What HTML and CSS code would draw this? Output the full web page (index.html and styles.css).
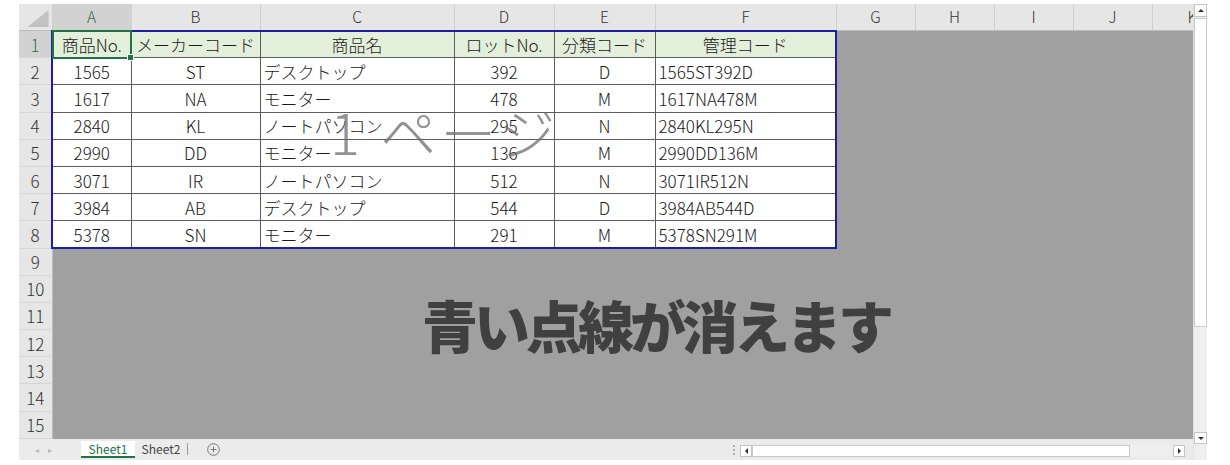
FILE: index.html
```html
<!DOCTYPE html>
<html lang="ja">
<head>
<meta charset="utf-8">
<title>Sheet</title>
<link rel="stylesheet" href="styles.css">
</head>
<body>
<div class="page">
  <div class="app">
    <table class="grid">
      <colgroup>
        <col class="w-rh"><col class="w-a"><col class="w-b"><col class="w-c"><col class="w-d"><col class="w-e"><col class="w-f"><col class="w-n"><col class="w-n"><col class="w-n"><col class="w-n"><col class="w-k">
      </colgroup>
      <thead>
        <tr class="hdr">
          <th class="corner"><div class="corner-in"><span class="tri"></span></div></th>
          <th class="sel">A</th><th>B</th><th>C</th><th>D</th><th>E</th><th>F</th><th>G</th><th>H</th><th>I</th><th>J</th><th class="kcol"><span class="kin">K</span></th>
        </tr>
      </thead>
      <tbody>
        <tr class="r">
          <th class="rh sel">1</th>
          <td class="c h bt bl">商品No.</td><td class="c h bt">メーカーコード</td><td class="c h bt">商品名</td><td class="c h bt">ロットNo.</td><td class="c h bt">分類コード</td><td class="c h bt br">管理コード</td>
          <td class="g"></td><td class="g"></td><td class="g"></td><td class="g"></td><td class="g"></td>
        </tr>
        <tr class="r">
          <th class="rh">2</th>
          <td class="c bl">1565</td><td class="c">ST</td><td class="c l">デスクトップ</td><td class="c">392</td><td class="c">D</td><td class="c l br">1565ST392D</td>
          <td class="g"></td><td class="g"></td><td class="g"></td><td class="g"></td><td class="g"></td>
        </tr>
        <tr class="r">
          <th class="rh">3</th>
          <td class="c bl">1617</td><td class="c">NA</td><td class="c l">モニター</td><td class="c">478</td><td class="c">M</td><td class="c l br">1617NA478M</td>
          <td class="g"></td><td class="g"></td><td class="g"></td><td class="g"></td><td class="g"></td>
        </tr>
        <tr class="r">
          <th class="rh">4</th>
          <td class="c bl">2840</td><td class="c">KL</td><td class="c l">ノートパソコン</td><td class="c">295</td><td class="c">N</td><td class="c l br">2840KL295N</td>
          <td class="g"></td><td class="g"></td><td class="g"></td><td class="g"></td><td class="g"></td>
        </tr>
        <tr class="r">
          <th class="rh">5</th>
          <td class="c bl">2990</td><td class="c">DD</td><td class="c l">モニター</td><td class="c">136</td><td class="c">M</td><td class="c l br">2990DD136M</td>
          <td class="g"></td><td class="g"></td><td class="g"></td><td class="g"></td><td class="g"></td>
        </tr>
        <tr class="r">
          <th class="rh">6</th>
          <td class="c bl">3071</td><td class="c">IR</td><td class="c l">ノートパソコン</td><td class="c">512</td><td class="c">N</td><td class="c l br">3071IR512N</td>
          <td class="g"></td><td class="g"></td><td class="g"></td><td class="g"></td><td class="g"></td>
        </tr>
        <tr class="r">
          <th class="rh">7</th>
          <td class="c bl">3984</td><td class="c">AB</td><td class="c l">デスクトップ</td><td class="c">544</td><td class="c">D</td><td class="c l br">3984AB544D</td>
          <td class="g"></td><td class="g"></td><td class="g"></td><td class="g"></td><td class="g"></td>
        </tr>
        <tr class="r">
          <th class="rh">8</th>
          <td class="c bl bb">5378</td><td class="c bb">SN</td><td class="c l bb">モニター</td><td class="c bb">291</td><td class="c bb">M</td><td class="c l br bb">5378SN291M</td>
          <td class="g"></td><td class="g"></td><td class="g"></td><td class="g"></td><td class="g"></td>
        </tr>
        <tr class="r"><th class="rh">9</th><td class="g" colspan="11"></td></tr>
        <tr class="r"><th class="rh">10</th><td class="g" colspan="11"></td></tr>
        <tr class="r"><th class="rh">11</th><td class="g" colspan="11"></td></tr>
        <tr class="r"><th class="rh">12</th><td class="g" colspan="11"></td></tr>
        <tr class="r"><th class="rh">13</th><td class="g" colspan="11"></td></tr>
        <tr class="r"><th class="rh">14</th><td class="g" colspan="11"></td></tr>
        <tr class="r"><th class="rh">15</th><td class="g" colspan="11"></td></tr>
      </tbody>
    </table>

    <div class="vscroll">
      <div class="vbtn"><span class="arr-up"></span></div>
      <div class="vthumb"></div>
      <div class="vfill"></div>
      <div class="vbtn vdown"><span class="arr-down"></span></div>
      <div class="vtail"></div>
    </div>

    <div class="bar">
      <div class="nav"><span class="nav-a">&#9666;</span><span class="nav-a">&#9656;</span></div>
      <div class="tab active">Sheet1</div>
      <div class="tab">Sheet2</div>
      <div class="tsep"></div>
      <div class="addsheet"><svg width="13" height="13" viewBox="0 0 13 13"><circle cx="6.5" cy="6.5" r="5.8" fill="none" stroke="#777" stroke-width="1"/><path d="M6.5 3.6v5.8M3.6 6.5h5.8" stroke="#777" stroke-width="1"/></svg></div>
      <div class="barfill"></div>
      <div class="grip"><i></i><i></i><i></i></div>
      <div class="hscroll">
        <div class="hbtn"><span class="arr-left"></span></div>
        <div class="hthumb"></div>
        <div class="hfill"></div>
        <div class="hbtn"><span class="arr-right"></span></div>
      </div>
      <div class="barend"></div>
    </div>
  </div>

  <div class="selbox"><span class="handle"></span></div>
  <div class="pagemark">1 ページ</div>
  <div class="caption">青い点線が消えます</div>
</div>
</body>
</html>
```

FILE: styles.css
```css
html, body {
  margin: 0;
  padding: 0;
  background: #ffffff;
}
body {
  font-family: "Noto Sans CJK JP", "Noto Sans", sans-serif;
  font-weight: 300;
  color: #222;
}
.page {
  position: relative;
  width: 1230px;
  height: 465px;
  padding: 4px 0 0 19px;
  box-sizing: border-box;
  overflow: hidden;
}
.app {
  display: grid;
  grid-template-columns: 1174px 14px;
  grid-template-rows: 435px 21px;
}

/* ---------- grid ---------- */
.grid {
  grid-column: 1;
  grid-row: 1;
  border-collapse: collapse;
  table-layout: fixed;
  width: 1174px;
  background: #a0a0a0;
}
.w-rh { width: 33px; }
.w-a { width: 79px; }
.w-b { width: 129px; }
.w-c { width: 194px; }
.w-d { width: 100px; }
.w-e { width: 101px; }
.w-f { width: 181px; }
.w-n { width: 79px; }
.w-k { width: 41px; }

.grid th, .grid td {
  padding: 0;
  white-space: nowrap;
  overflow: hidden;
  line-height: 1;
}
.hdr { height: 26px; }
.hdr th {
  background: #e6e6e6;
  border-right: 1px solid #d0d0d0;
  border-bottom: 1px solid #bdbdbd;
  font-weight: 300;
  font-size: 15.5px;
  color: #333;
  text-align: center;
}
.hdr th.sel {
  background: #d2d2d2;
  color: #3d6b4c;
}
.hdr th.kcol {
  text-align: left;
  border-right: none;
}
.kin {
  display: inline-block;
  padding-left: 35px;
}
.corner-in {
  display: flex;
  justify-content: flex-end;
  align-items: flex-end;
  height: 26px;
  padding: 0 3px 3px 0;
  box-sizing: border-box;
}
.tri {
  display: block;
  width: 21px;
  height: 17px;
  background: #c2c2c2;
  clip-path: polygon(100% 0, 100% 100%, 0 100%);
}

.r { height: 27.2px; }
.rh {
  background: #e6e6e6;
  border-right: 1px solid #bdbdbd;
  border-bottom: 1px solid #d6d6d6;
  font-weight: 300;
  font-size: 17px;
  color: #333;
  text-align: center;
}
.rh.sel {
  background: #d2d2d2;
  color: #3d6b4c;
}

.c {
  background: #ffffff;
  border: 1px solid #5c5c5c;
  font-size: 17px;
  color: #1a1a1a;
  text-align: center;
}
.c.l {
  text-align: left;
  padding-left: 3px;
}
.c.h { background: #e2efda; }
.bt { border-top: 2px solid #1d1da6; }
.bl { border-left: 2px solid #1d1da6; }
.br { border-right: 2px solid #1d1da6; }
.bb { border-bottom: 2px solid #1d1da6; }
.g {
  background: #a0a0a0;
  border: 1px solid #a0a0a0;
}

/* ---------- vertical scrollbar ---------- */
.vscroll {
  grid-column: 2;
  grid-row: 1 / span 2;
  display: flex;
  flex-direction: column;
  background: #efefef;
  border-left: 1px solid #e2e2e2;
  box-sizing: border-box;
}
.vbtn {
  height: 13px;
  background: #ffffff;
  border: 1px solid #c4c4c4;
  box-sizing: border-box;
  display: flex;
  align-items: center;
  justify-content: center;
}
.vdown { height: 12px; }
.vthumb {
  height: 309px;
  margin-top: 1px;
  background: #ffffff;
  border: 1px solid #c9c9c9;
  box-sizing: border-box;
}
.vfill { flex: 1; }
.vtail { height: 16px; }
.arr-up {
  width: 0; height: 0;
  border-left: 3px solid transparent;
  border-right: 3px solid transparent;
  border-bottom: 3px solid #333;
}
.arr-down {
  width: 0; height: 0;
  border-left: 3px solid transparent;
  border-right: 3px solid transparent;
  border-top: 3px solid #333;
}

/* ---------- bottom bar ---------- */
.bar {
  grid-column: 1;
  grid-row: 2;
  display: flex;
  align-items: flex-start;
  background: #ebebeb;
  padding-top: 2px;
  box-sizing: border-box;
  font-weight: 400;
}
.nav {
  width: 62px;
  height: 17px;
  display: flex;
  align-items: center;
  padding-left: 16px;
  box-sizing: border-box;
  gap: 9px;
}
.nav-a {
  font-size: 8px;
  color: #b5b5b5;
}
.tab {
  width: 54px;
  height: 17px;
  font-size: 12px;
  line-height: 15px;
  color: #444;
  text-align: center;
  box-sizing: border-box;
}
.tab.active {
  background: #ffffff;
  color: #217346;
  border-bottom: 2px solid #217346;
}
.tab + .tab { width: 52px; }
.tsep {
  width: 1px;
  height: 12px;
  margin-top: 2px;
  background: #9a9a9a;
}
.addsheet {
  margin-left: 19px;
  margin-top: 2px;
  display: flex;
}
.barfill { flex: 1; }
.grip {
  width: 13px;
  height: 17px;
  display: flex;
  flex-direction: column;
  justify-content: center;
  align-items: center;
  gap: 2px;
}
.grip i {
  display: block;
  width: 2px;
  height: 2px;
  background: #b0b0b0;
}
.hscroll {
  width: 445px;
  height: 12px;
  margin-top: 4px;
  display: flex;
  background: #efefef;
}
.hbtn {
  width: 12px;
  height: 12px;
  background: #ffffff;
  border: 1px solid #c4c4c4;
  box-sizing: border-box;
  display: flex;
  align-items: center;
  justify-content: center;
}
.hthumb {
  width: 378px;
  height: 12px;
  background: #ffffff;
  border: 1px solid #c9c9c9;
  box-sizing: border-box;
}
.hfill { flex: 1; }
.barend { width: 8px; }
.arr-left {
  width: 0; height: 0;
  border-top: 3px solid transparent;
  border-bottom: 3px solid transparent;
  border-right: 3px solid #333;
}
.arr-right {
  width: 0; height: 0;
  border-top: 3px solid transparent;
  border-bottom: 3px solid transparent;
  border-left: 3px solid #333;
}

/* ---------- overlays ---------- */
.selbox {
  position: absolute;
  left: 52px;
  top: 30px;
  width: 80px;
  height: 29px;
  border: 2px solid #217346;
  box-sizing: border-box;
}
.handle {
  position: absolute;
  right: -4px;
  bottom: -4px;
  width: 5px;
  height: 5px;
  background: #217346;
  border: 1px solid #fff;
}
.pagemark {
  position: absolute;
  left: 330px;
  top: 103px;
  font-size: 56px;
  line-height: 56px;
  font-weight: 300;
  letter-spacing: 4px;
  color: rgba(110, 110, 110, 0.75);
  white-space: nowrap;
}
.caption {
  position: absolute;
  left: 422px;
  top: 296px;
  font-size: 56px;
  line-height: 56px;
  font-weight: 900;
  letter-spacing: -4px;
  color: #404040;
  white-space: nowrap;
}
```
